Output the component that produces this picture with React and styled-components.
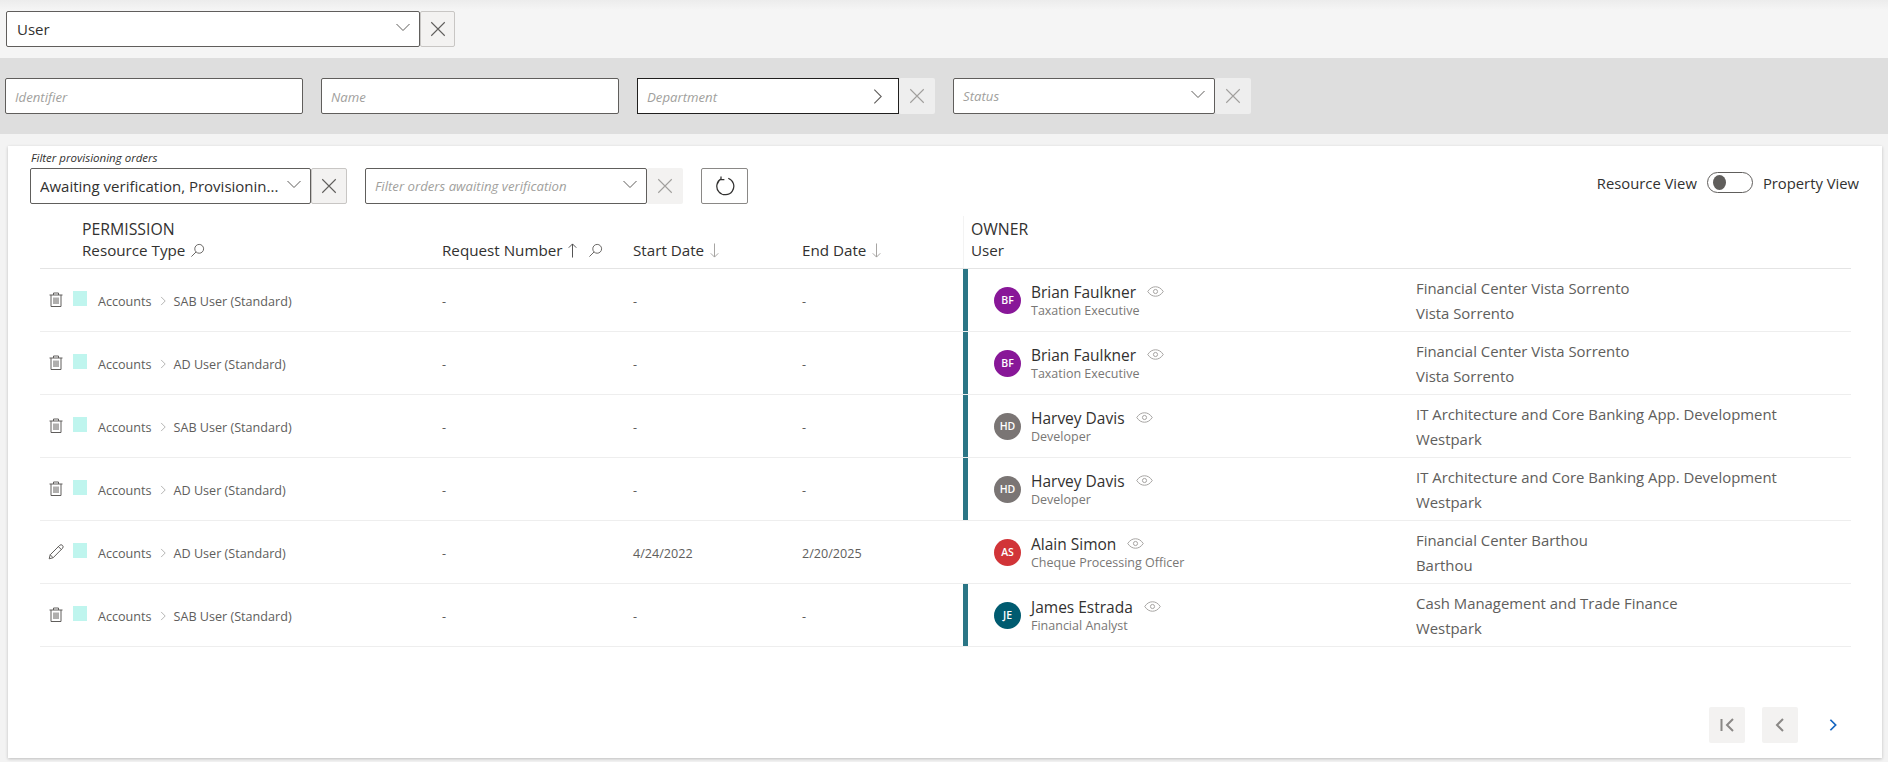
import React from 'react'
import styled, { createGlobalStyle } from 'styled-components'

const GlobalStyle = createGlobalStyle`
  html, body { margin: 0; padding: 0; background: #f3f3f3; }
  body { font-family: "Open Sans", "Noto Sans", "Liberation Sans", sans-serif; color: #323130; }
`

const Svg = ({ size = 16, children, ...rest }) => (
  <svg width={size} height={size} viewBox="0 0 16 16" fill="none" stroke="currentColor" strokeWidth="1" {...rest}>
    {children}
  </svg>
)

const ChevronDown = (p) => <Svg {...p}><path d="M1.5 5l6.5 6.5L14.5 5" /></Svg>
const ChevronRight = (p) => <Svg {...p}><path d="M5 1.5L11.5 8 5 14.5" /></Svg>
const Cancel = (p) => <Svg {...p}><path d="M2 2l12 12M14 2L2 14" /></Svg>
const Search = (p) => <Svg {...p}><circle cx="9.8" cy="6.2" r="4.7" /><path d="M6.4 9.6L1.500 14.500" /></Svg>
const ArrowUp = (p) => <Svg {...p}><path d="M8 15.500V1M4 5l4-4 4 4" /></Svg>
const ArrowDown = (p) => <Svg {...p}><path d="M8 .5V15M4 11l4 4 4-4" /></Svg>
const Refresh = (p) => <Svg {...p}><path d="M10.600 1.800A6.800 6.800 0 1 1 5.200 2.100M4.800 .3V2.800H7.500" /></Svg>
const Trash = (p) => (
  <Svg {...p}>
    <path d="M1.500 3h13M5.500 3V1h5v2M3 3v11.500h10V3M6 5.500v6.500M8 5.500v6.500M10 5.500v6.500" />
  </Svg>
)
const Pencil = (p) => (
  <Svg {...p}>
    <path d="M1.200 14.800l1-4L11.600 1.400a1.800 1.800 0 0 1 2.900 2.900L5.200 13.700zM2.200 10.800l3 3M10.400 2.600l3 3" />
  </Svg>
)
const Eye = (p) => (
  <Svg {...p} viewBox="0 0 18 12">
    <path d="M.8 6C3 2.600 5.800 1 9 1s6 1.600 8.200 5C15 9.400 12.200 11 9 11S3 9.400.8 6z" />
    <circle cx="9" cy="6" r="2.200" />
  </Svg>
)
const FirstPage = (p) => (
  <Svg {...p} strokeWidth="2"><path d="M2.500 2v12M14 2L8 8l6 6" /></Svg>
)
const Prev = (p) => <Svg {...p} strokeWidth="2"><path d="M11 2L5 8l6 6" /></Svg>
const Next = (p) => <Svg {...p} strokeWidth="2"><path d="M5 2l6 6-6 6" /></Svg>

const columns = '402px 191px 169px 161px 453px 1fr'

const rows = [
  { action: 'delete', resource: 'SAB User (Standard)', start: '-', end: '-', initials: 'BF', color: '#881798', name: 'Brian Faulkner', job: 'Taxation Executive', place: 'Financial Center Vista Sorrento', city: 'Vista Sorrento', bar: true },
  { action: 'delete', resource: 'AD User (Standard)', start: '-', end: '-', initials: 'BF', color: '#881798', name: 'Brian Faulkner', job: 'Taxation Executive', place: 'Financial Center Vista Sorrento', city: 'Vista Sorrento', bar: true },
  { action: 'delete', resource: 'SAB User (Standard)', start: '-', end: '-', initials: 'HD', color: '#7a7574', name: 'Harvey Davis', job: 'Developer', place: 'IT Architecture and Core Banking App. Development', city: 'Westpark', bar: true },
  { action: 'delete', resource: 'AD User (Standard)', start: '-', end: '-', initials: 'HD', color: '#7a7574', name: 'Harvey Davis', job: 'Developer', place: 'IT Architecture and Core Banking App. Development', city: 'Westpark', bar: true },
  { action: 'edit', resource: 'AD User (Standard)', start: '4/24/2022', end: '2/20/2025', initials: 'AS', color: '#d13438', name: 'Alain Simon', job: 'Cheque Processing Officer', place: 'Financial Center Barthou', city: 'Barthou', bar: false },
  { action: 'delete', resource: 'SAB User (Standard)', start: '-', end: '-', initials: 'JE', color: '#005b70', name: 'James Estrada', job: 'Financial Analyst', place: 'Cash Management and Trade Finance', city: 'Westpark', bar: true },
]

const App = () => {
  return (
    <Page>
      <GlobalStyle />
      <TopBar>
        <Field $width="414px" $wide>
          User
          <FieldIcon><ChevronDown size={16} /></FieldIcon>
        </Field>
        <ClearButton $width="35px" $bordered><Cancel size={18} /></ClearButton>
      </TopBar>

      <FilterBand>
        <Field $width="298px" $placeholder $low>Identifier</Field>
        <Field $width="298px" $placeholder $low $gapLeft="18px">Name</Field>
        <Field $width="262px" $placeholder $low $dark $gapLeft="18px">
          Department
          <FieldIcon $flat><ChevronRight size={17} /></FieldIcon>
        </Field>
        <ClearButton $width="36px" $dim><Cancel size={18} /></ClearButton>
        <Field $width="262px" $placeholder $gapLeft="18px">
          Status
          <FieldIcon><ChevronDown size={16} /></FieldIcon>
        </Field>
        <ClearButton $width="36px" $dim><Cancel size={18} /></ClearButton>
      </FilterBand>

      <Panel>
        <Toolbar>
          <ToolbarLeft>
            <FilterLabel>Filter provisioning orders</FilterLabel>
            <ToolbarFields>
              <Field $width="281px">
                <Ellipsis>Awaiting verification, Provisionin...</Ellipsis>
                <FieldIcon><ChevronDown size={16} /></FieldIcon>
              </Field>
              <ClearButton $width="36px" $bordered><Cancel size={18} /></ClearButton>
              <Field $width="282px" $placeholder $gapLeft="18px">
                Filter orders awaiting verification
                <FieldIcon><ChevronDown size={16} /></FieldIcon>
              </Field>
              <ClearButton $width="36px" $dim $soft><Cancel size={18} /></ClearButton>
              <RefreshButton><Refresh size={20} /></RefreshButton>
            </ToolbarFields>
          </ToolbarLeft>
          <ViewSwitch>
            <span>Resource View</span>
            <Toggle><Knob /></Toggle>
            <span>Property View</span>
          </ViewSwitch>
        </Toolbar>

        <Table>
          <HeadRow>
            <HeadCell $indent="42px">
              <Caps>PERMISSION</Caps>
              <HeadLine>Resource Type <HeadIcon $left="5px"><Search size={15} /></HeadIcon></HeadLine>
            </HeadCell>
            <HeadCell>
              <HeadLine>
                Request Number
                <HeadIcon $left="3px" $dark><ArrowUp size={15} /></HeadIcon>
                <HeadIcon $left="8px"><Search size={15} /></HeadIcon>
              </HeadLine>
            </HeadCell>
            <HeadCell>
              <HeadLine>Start Date<HeadIcon $left="3px" $faint><ArrowDown size={15} /></HeadIcon></HeadLine>
            </HeadCell>
            <HeadCell>
              <HeadLine>End Date<HeadIcon $left="3px" $faint><ArrowDown size={15} /></HeadIcon></HeadLine>
            </HeadCell>
            <HeadCell $indent="7px" $divider>
              <Caps>OWNER</Caps>
              <div>User</div>
            </HeadCell>
            <HeadCell />
          </HeadRow>

          {rows.map((r, i) => (
            <Row key={i}>
              <PermissionCell>
                <ActionIcon>{r.action === 'delete' ? <Trash size={16} /> : <Pencil size={16} />}</ActionIcon>
                <Swatch />
                <Crumb>Accounts</Crumb>
                <CrumbIcon><ChevronRight size={10} /></CrumbIcon>
                <Crumb>{r.resource}</Crumb>
              </PermissionCell>
              <PlainCell>-</PlainCell>
              <PlainCell>{r.start}</PlainCell>
              <PlainCell>{r.end}</PlainCell>
              <OwnerCell $bar={r.bar}>
                <Avatar $color={r.color}>{r.initials}</Avatar>
                <div>
                  <NameLine>
                    {r.name}
                    <EyeIcon><Eye size={17} /></EyeIcon>
                  </NameLine>
                  <Job>{r.job}</Job>
                </div>
              </OwnerCell>
              <PlaceCell>
                <div>{r.place}</div>
                <div>{r.city}</div>
              </PlaceCell>
            </Row>
          ))}
        </Table>

        <Pager>
          <PageButton><FirstPage size={16} /></PageButton>
          <PageButton><Prev size={16} /></PageButton>
          <NextButton><Next size={14} /></NextButton>
        </Pager>
      </Panel>
    </Page>
  )
}

export default App

const Page = styled.div`
  width: 1888px;
  height: 762px;
  display: flex;
  flex-direction: column;
  overflow: hidden;
  background: #f3f3f3;
`

const TopBar = styled.div`
  height: 58px;
  box-sizing: border-box;
  padding: 11px 0 0 6px;
  display: flex;
  align-items: flex-start;
  background: linear-gradient(#ececec 0, #f5f5f5 10px);
`

const FilterBand = styled.div`
  height: 76px;
  box-sizing: border-box;
  padding: 20px 0 0 5px;
  display: flex;
  align-items: flex-start;
  background: #dedede;
`

const Field = styled.div`
  width: ${(p) => p.$width};
  height: 36px;
  margin-left: ${(p) => p.$gapLeft || 0};
  box-sizing: border-box;
  padding: ${(p) => (p.$low ? '2px 9px 0' : p.$wide ? '0 9px 0 10px' : '0 9px')};
  display: flex;
  align-items: center;
  justify-content: space-between;
  background: #fff;
  border: 1px solid ${(p) => (p.$dark ? '#201f1e' : '#605e5c')};
  border-radius: ${(p) => (p.$dark ? '0' : '2px')};
  font-size: ${(p) => (p.$placeholder ? '13.200px' : '15px')};
  font-style: ${(p) => (p.$placeholder ? 'italic' : 'normal')};
  color: ${(p) => (p.$placeholder ? '#a19f9d' : '#323130')};
  white-space: nowrap;
`

const Ellipsis = styled.span`
  overflow: hidden;
`

const FieldIcon = styled.span`
  display: flex;
  margin-top: ${(p) => (p.$flat ? '-2px' : '-4px')};
  margin-right: ${(p) => (p.$flat ? '3px' : '-1px')};
  color: #605e5c;
`

const ClearButton = styled.div`
  width: ${(p) => p.$width};
  height: 36px;
  box-sizing: border-box;
  display: flex;
  align-items: center;
  justify-content: center;
  background: ${(p) => (p.$soft || p.$bordered ? '#f3f2f1' : '#eeeeee')};
  color: ${(p) => (p.$dim ? '#a19f9d' : '#605e5c')};
  border: ${(p) => (p.$bordered ? '1px solid #c8c6c4' : '0')};
  border-radius: 2px;
`

const Panel = styled.div`
  flex: 1;
  margin: 12px 6px 4px 8px;
  display: flex;
  flex-direction: column;
  background: #fff;
  box-shadow: 0 1px 3px rgba(0, 0, 0, 0.22);
`

const Toolbar = styled.div`
  height: 58px;
  padding: 0 23px 0 22px;
  display: flex;
  justify-content: space-between;
`

const ToolbarLeft = styled.div`
  display: flex;
  flex-direction: column;
`

const FilterLabel = styled.div`
  height: 22px;
  line-height: 24px;
  padding-left: 1px;
  font-size: 11.500px;
  font-style: italic;
  color: #323130;
`

const ToolbarFields = styled.div`
  display: flex;
`

const RefreshButton = styled.div`
  width: 47px;
  height: 36px;
  margin-left: 18px;
  box-sizing: border-box;
  display: flex;
  align-items: center;
  justify-content: center;
  border: 1px solid #8a8886;
  border-radius: 2px;
  color: #323130;
`

const ViewSwitch = styled.div`
  height: 21px;
  margin-top: 26px;
  display: flex;
  align-items: center;
  gap: 10px;
  font-size: 14.800px;
  color: #323130;
`

const Toggle = styled.div`
  width: 46px;
  height: 21px;
  box-sizing: border-box;
  padding-left: 5px;
  display: flex;
  align-items: center;
  border: 1px solid #605e5c;
  border-radius: 11px;
`

const Knob = styled.div`
  width: 13px;
  height: 15px;
  border-radius: 50%;
  background: #605e5c;
`

const Table = styled.div`
  margin: 0 31px 0 32px;
`

const HeadRow = styled.div`
  height: 65px;
  box-sizing: border-box;
  display: grid;
  grid-template-columns: ${columns};
  border-bottom: 1px solid #e4e4e4;
`

const HeadCell = styled.div`
  box-sizing: border-box;
  margin-top: ${(p) => (p.$divider ? '12px' : '0')};
  padding: 0 0 7px ${(p) => p.$indent || 0};
  display: flex;
  flex-direction: column;
  justify-content: flex-end;
  line-height: 21px;
  font-size: 15.200px;
  font-weight: 500;
  color: #323130;
  border-left: ${(p) => (p.$divider ? '1px solid #f3f3f3' : '0')};
`

const Caps = styled.div`
  font-size: 15.800px;
`

const HeadLine = styled.div`
  display: flex;
  align-items: center;
`

const HeadIcon = styled.span`
  display: flex;
  margin-left: ${(p) => p.$left};
  color: ${(p) => (p.$dark ? '#4a4a4a' : p.$faint ? '#a19f9d' : '#605e5c')};
`

const Row = styled.div`
  height: 63px;
  box-sizing: border-box;
  display: grid;
  grid-template-columns: ${columns};
  border-bottom: 1px solid #eeeeee;
`

const PermissionCell = styled.div`
  padding: 2px 0 0 8px;
  display: flex;
  align-items: center;
  font-size: 12.600px;
  color: #605e5c;
`

const ActionIcon = styled.span`
  width: 25px;
  margin-top: -3px;
  display: flex;
  color: #605e5c;
`

const Swatch = styled.span`
  width: 14px;
  height: 15px;
  margin: -5px 11px 0 0;
  background: #bff5ee;
`

const Crumb = styled.span`
  white-space: nowrap;
`

const CrumbIcon = styled.span`
  margin: 0 6px 0 6px;
  display: flex;
  color: #8a8886;
`

const PlainCell = styled.div`
  padding-top: 2px;
  display: flex;
  align-items: center;
  font-size: 12.600px;
  color: #605e5c;
`

const OwnerCell = styled.div`
  padding-left: 26px;
  display: flex;
  align-items: center;
  gap: 10px;
  border-left: 5px solid ${(p) => (p.$bar ? '#2b7686' : 'transparent')};
`

const Avatar = styled.div`
  width: 27px;
  height: 27px;
  flex: none;
  display: flex;
  align-items: center;
  justify-content: center;
  border-radius: 50%;
  background: ${(p) => p.$color};
  color: #fff;
  font-size: 10.500px;
  font-weight: 600;
`

const NameLine = styled.div`
  padding-top: 1px;
  display: flex;
  align-items: center;
  line-height: 21px;
  font-size: 15.500px;
  color: #323130;
`

const EyeIcon = styled.span`
  display: flex;
  margin: -2px 0 0 11px;
  color: #a19f9d;
`

const Job = styled.div`
  line-height: 16px;
  font-size: 12.500px;
  color: #797775;
`

const PlaceCell = styled.div`
  padding-top: 2px;
  display: flex;
  flex-direction: column;
  justify-content: center;
  line-height: 25px;
  font-size: 14.900px;
  color: #605e5c;
`

const Pager = styled.div`
  margin-top: auto;
  padding: 0 31px 15px 0;
  display: flex;
  align-items: center;
  justify-content: flex-end;
`

const PageButton = styled.div`
  width: 36px;
  height: 36px;
  margin-right: 17px;
  display: flex;
  align-items: center;
  justify-content: center;
  background: #f3f2f1;
  border-radius: 2px;
  color: #8a8886;
`

const NextButton = styled.div`
  width: 36px;
  height: 36px;
  display: flex;
  align-items: center;
  justify-content: center;
  color: #1565c0;
`
